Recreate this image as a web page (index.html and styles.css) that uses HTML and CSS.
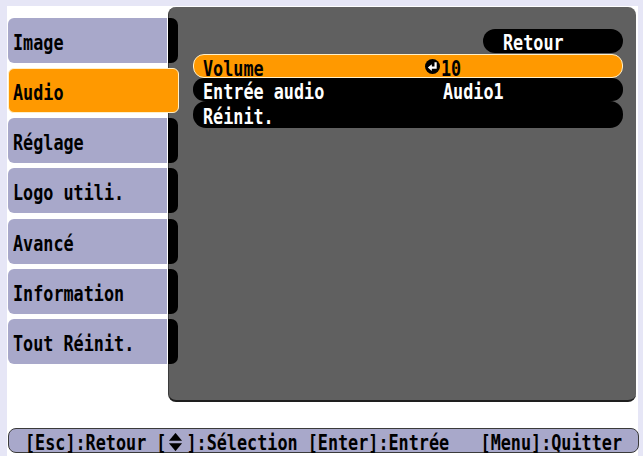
FILE: index.html
```html
<!DOCTYPE html>
<html lang="fr">
<head>
<meta charset="utf-8">
<title>Audio</title>
<link rel="stylesheet" href="styles.css">
</head>
<body>
<div class="screen">
  <div class="main">
    <nav class="tabs">
      <div class="tab"><span class="t">Image</span></div>
      <div class="tab active"><span class="t">Audio</span></div>
      <div class="tab"><span class="t">Réglage</span></div>
      <div class="tab"><span class="t">Logo utili.</span></div>
      <div class="tab"><span class="t">Avancé</span></div>
      <div class="tab"><span class="t">Information</span></div>
      <div class="tab"><span class="t">Tout Réinit.</span></div>
    </nav>
    <section class="panel">
      <div class="back-row">
        <div class="back"><span class="t">Retour</span></div>
      </div>
      <div class="rows">
        <div class="row sel">
          <div class="label"><span class="t">Volume</span></div>
          <div class="value">
            <svg class="enter" width="15" height="15" viewBox="0 0 15 15">
              <circle cx="7.5" cy="7.5" r="7.5" fill="#000"/>
              <path d="M10.6 3.2 V8.6 H6" fill="none" stroke="#fff" stroke-width="2.2"/>
              <polygon points="2.8,8.6 6.8,5.2 6.8,12" fill="#fff"/>
            </svg><span class="t">10</span>
          </div>
        </div>
        <div class="row">
          <div class="label"><span class="t">Entrée audio</span></div>
          <div class="value pad"><span class="t">Audio1</span></div>
        </div>
        <div class="row last">
          <div class="label"><span class="t">Réinit.</span></div>
        </div>
      </div>
    </section>
  </div>
  <footer class="footer">
    <span class="t">[Esc]:Retour [<svg class="updown" width="15" height="14" viewBox="0 0 15 16"><polygon points="0,7 7.5,0 15,7" fill="#000"/><polygon points="0,9 15,9 7.5,16" fill="#000"/></svg>]:Sélection [Enter]:Entrée</span>
    <span class="t">[Menu]:Quitter</span>
  </footer>
</div>
</body>
</html>
```
FILE: styles.css
```css
html, body {
  margin: 0;
  padding: 0;
}
body {
  background: #e6e6f6;
  font-family: "DejaVu Sans Mono", "Liberation Mono", monospace;
  font-weight: bold;
  font-size: 16.8px;
  color: #000;
  width: 643px;
  height: 456px;
  overflow: hidden;
}
.screen {
  margin: 6px 5px 0 7px;
  height: 450px;
  background: #ffffff;
  display: flex;
  flex-direction: column;
}
.t {
  display: inline-block;
  transform: scaleY(1.3);
  white-space: pre;
  line-height: 20px;
}
.main {
  display: flex;
  height: 397px;
}
.tabs {
  width: 159px;
  padding-left: 1px;
  padding-top: 12px;
  display: flex;
  flex-direction: column;
  gap: 5.17px;
  position: relative;
  z-index: 2;
}
.tab {
  position: relative;
  box-sizing: border-box;
  width: 159px;
  height: 45px;
  background: #a8a8ca;
  border-radius: 6px 0 0 6px;
  padding: 3px 0 0 5px;
  display: flex;
  align-items: center;
}
.tab::after {
  content: "";
  position: absolute;
  left: 160px;
  top: 0;
  bottom: 0;
  width: 10px;
  background: #000;
  border-radius: 0 7px 7px 0;
}
.tab.active {
  width: 171px;
  background: #ff9900;
  border: 1px solid #fff0c8;
  border-radius: 6px;
  padding-left: 4px;
}
.tab.active::after {
  display: none;
}
.panel {
  flex: 1;
  box-sizing: border-box;
  margin: 1px 2px 0 1px;
  height: 395px;
  background: #606060;
  border-radius: 8px;
  border-bottom: 2px solid #1e1e1e;
  border-left: 1px solid #3a3a3a;
  padding: 22px 13px 0 24px;
  color: #fff;
}
.back-row {
  display: flex;
  justify-content: flex-end;
}
.back {
  box-sizing: border-box;
  width: 140px;
  height: 24px;
  background: #000;
  border-radius: 12px;
  padding: 2px 0 0 20px;
  display: flex;
  align-items: center;
}
.rows {
  display: flex;
  flex-direction: column;
  margin-top: 1px;
}
.row {
  box-sizing: border-box;
  height: 23px;
  background: #000;
  border-radius: 11px;
  padding: 3px 0 0 10px;
  display: flex;
  align-items: center;
}
.row.sel {
  height: 24px;
  background: #ff9900;
  border: 1px solid #fff0c8;
  padding-left: 9px;
  color: #000;
}
.row.last {
  height: 27px;
  border-radius: 13px;
}
.label {
  width: 222px;
}
.value {
  display: flex;
  align-items: center;
}
.value.pad {
  padding-left: 18px;
}
.enter {
  margin-right: 1px;
  margin-top: -2px;
}
.footer {
  box-sizing: border-box;
  margin: 25px -1px 0 1px;
  height: 25px;
  background: #a8a8ca;
  border: 1px solid #3a3a3a;
  border-radius: 8px;
  padding: 2px 16px 0 16px;
  display: flex;
  justify-content: space-between;
  align-items: center;
}
.updown {
  vertical-align: -1px;
  margin: 0 3px 0 2px;
}
```
